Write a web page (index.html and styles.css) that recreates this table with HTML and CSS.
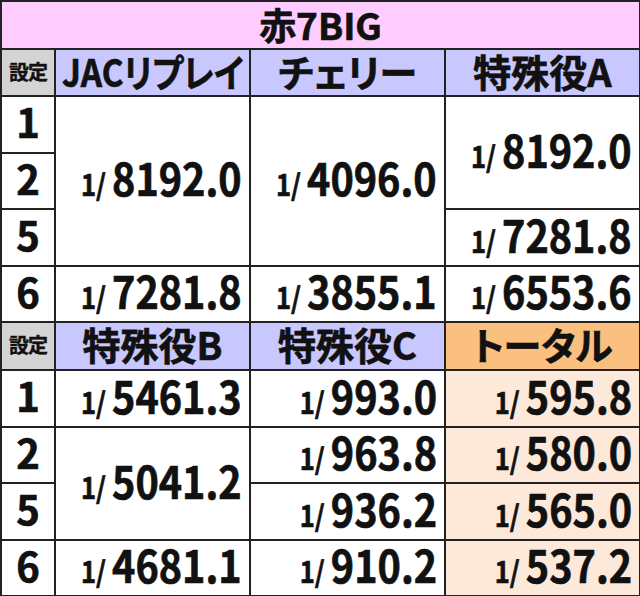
FILE: index.html
```html
<!DOCTYPE html>
<html lang="ja">
<head>
<meta charset="utf-8">
<link rel="stylesheet" href="styles.css">
</head>
<body>
<table class="tbl">
  <colgroup>
    <col class="c-set"><col class="c-val"><col class="c-val"><col class="c-val">
  </colgroup>
  <tr class="r-title"><th colspan="4" class="title">赤7BIG</th></tr>
  <tr class="r-head">
    <th class="set-h">設定</th>
    <th class="head"><span class="hx hx-narrow">JACリプレイ</span></th>
    <th class="head"><span class="hx">チェリー</span></th>
    <th class="head"><span class="hx">特殊役A</span></th>
  </tr>
  <tr class="r-row">
    <td class="set">1</td>
    <td class="val" rowspan="3"><span class="n"><span class="s">1/</span><span class="b">8192.0</span></span></td>
    <td class="val" rowspan="3"><span class="n"><span class="s">1/</span><span class="b">4096.0</span></span></td>
    <td class="val" rowspan="2"><span class="n"><span class="s">1/</span><span class="b">8192.0</span></span></td>
  </tr>
  <tr class="r-row"><td class="set">2</td></tr>
  <tr class="r-row">
    <td class="set">5</td>
    <td class="val"><span class="n"><span class="s">1/</span><span class="b">7281.8</span></span></td>
  </tr>
  <tr class="r-row">
    <td class="set">6</td>
    <td class="val"><span class="n"><span class="s">1/</span><span class="b">7281.8</span></span></td>
    <td class="val"><span class="n"><span class="s">1/</span><span class="b">3855.1</span></span></td>
    <td class="val"><span class="n"><span class="s">1/</span><span class="b">6553.6</span></span></td>
  </tr>
  <tr class="r-head2">
    <th class="set-h">設定</th>
    <th class="head"><span class="hx">特殊役B</span></th>
    <th class="head"><span class="hx">特殊役C</span></th>
    <th class="head total-h"><span class="hx">トータル</span></th>
  </tr>
  <tr class="r-row">
    <td class="set">1</td>
    <td class="val"><span class="n"><span class="s">1/</span><span class="b">5461.3</span></span></td>
    <td class="val"><span class="n"><span class="s">1/</span><span class="b">993.0</span></span></td>
    <td class="val total"><span class="n"><span class="s">1/</span><span class="b">595.8</span></span></td>
  </tr>
  <tr class="r-row">
    <td class="set">2</td>
    <td class="val" rowspan="2"><span class="n"><span class="s">1/</span><span class="b">5041.2</span></span></td>
    <td class="val"><span class="n"><span class="s">1/</span><span class="b">963.8</span></span></td>
    <td class="val total"><span class="n"><span class="s">1/</span><span class="b">580.0</span></span></td>
  </tr>
  <tr class="r-row">
    <td class="set">5</td>
    <td class="val"><span class="n"><span class="s">1/</span><span class="b">936.2</span></span></td>
    <td class="val total"><span class="n"><span class="s">1/</span><span class="b">565.0</span></span></td>
  </tr>
  <tr class="r-row">
    <td class="set">6</td>
    <td class="val"><span class="n"><span class="s">1/</span><span class="b">4681.1</span></span></td>
    <td class="val"><span class="n"><span class="s">1/</span><span class="b">910.2</span></span></td>
    <td class="val total"><span class="n"><span class="s">1/</span><span class="b">537.2</span></span></td>
  </tr>
</table>
</body>
</html>
```

FILE: styles.css
```css
html, body {
  margin: 0;
  padding: 0;
  background: #ffffff;
}

body {
  font-family: "Noto Sans CJK JP", "Noto Sans", sans-serif;
  font-weight: 700;
  color: #111111;
}

.tbl {
  border-collapse: collapse;
  table-layout: fixed;
  width: 638px;
  margin: 0;
}

.tbl th,
.tbl td {
  border: 2px solid #222222;
  padding: 0;
  line-height: 1;
  white-space: nowrap;
  font-weight: 700;
  -webkit-text-stroke: 0.7px #111111;
}

.c-set { width: 54px; }
.c-val { width: 195px; }

.r-title { height: 48px; }
.r-head { height: 47px; }
.r-head2 { height: 48px; }
.r-row { height: 56.5px; }

.tbl .title {
  background: #ffccff;
  font-size: 37px;
  text-align: center;
  padding-bottom: 2px;
}

.tbl .set-h {
  background: #d4d4d4;
  font-size: 20px;
  letter-spacing: -1px;
  text-align: center;
  padding-bottom: 2px;
  -webkit-text-stroke: 0.4px #111111;
}

.tbl .head {
  background: #c8c8ff;
  font-size: 38px;
  text-align: center;
  padding-bottom: 4px;
  font-feature-settings: "palt";
}

.tbl .total-h {
  background: #fbbf80;
}

.hx {
  display: inline-block;
  margin: 0 -20px;
}

.hx-narrow {
  transform: scaleX(0.875);
  transform-origin: center;
}

.tbl .set {
  font-size: 40px;
  text-align: center;
  padding-bottom: 6px;
}

.tbl .val {
  text-align: right;
  padding-right: 7px;
  padding-bottom: 8px;
  background: #ffffff;
}

.tbl .total {
  background: #fde9d9;
}

.n {
  display: inline-block;
  transform: scaleX(0.88);
  transform-origin: right center;
}

.s {
  font-size: 29px;
  margin-right: 7px;
}

.b {
  font-size: 45px;
}
```
